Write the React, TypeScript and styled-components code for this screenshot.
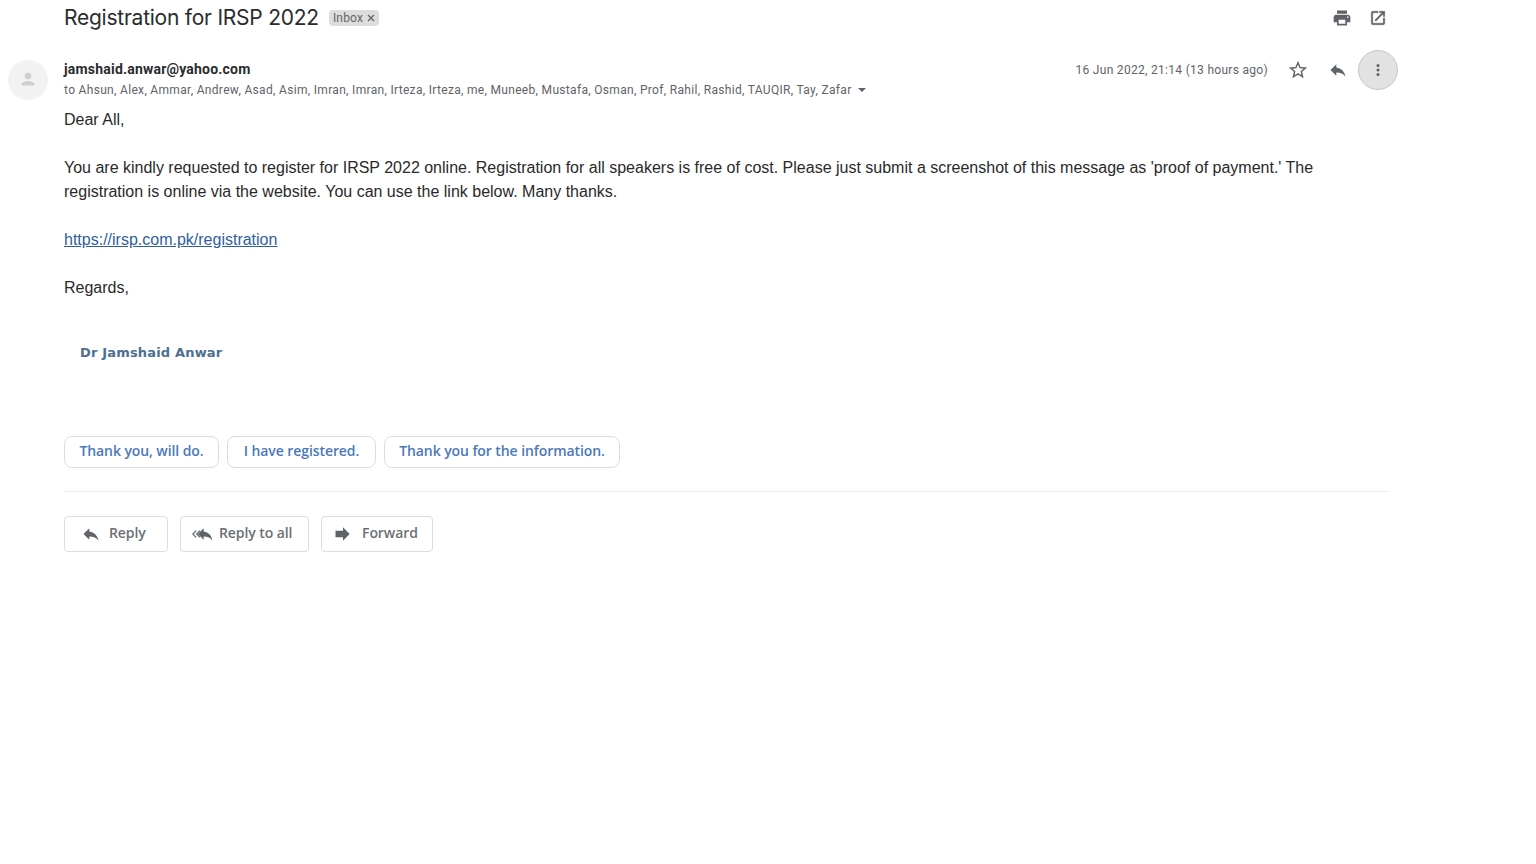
import React from "react";
import styled, { createGlobalStyle } from "styled-components";

const Global = createGlobalStyle`
  html, body { margin: 0; padding: 0; background: #fff; }
  body { font-family: Roboto, "Liberation Sans", sans-serif; color: #202124; }
`;

const Page = styled.div`
  width: 1536px;
  height: 864px;
  overflow: hidden;
  display: flex;
  flex-direction: column;
`;

const TitleRow = styled.div`
  height: 36px;
  width: 1396px;
  padding: 0 6px 0 64px;
  box-sizing: border-box;
  display: flex;
  align-items: center;
  margin-bottom: 14px;
`;

const Subject = styled.h1`
  margin: 0;
  font: 400 21px/28px Inter, Roboto, sans-serif;
  color: #2a2b2e;
  letter-spacing: -0.24px;
`;

const Label = styled.span`
  margin-left: 10px;
  height: 16px;
  padding: 0 4px;
  background: #dddddd;
  border-radius: 4px;
  display: inline-flex;
  align-items: center;
  gap: 4px;
  font: 400 12px/16px Roboto, sans-serif;
  letter-spacing: 0.2px;
  color: #666;
`;

const TitleTools = styled.div`
  margin-left: auto;
  display: flex;
  gap: 12px;
`;

const ToolSlot = styled.span`
  width: 24px;
  height: 24px;
  display: flex;
  align-items: center;
  justify-content: center;
  color: #5f6368;
`;

const Message = styled.div`
  display: flex;
  width: 1398px;
`;

const AvatarColumn = styled.div`
  width: 64px;
  padding-left: 8px;
  box-sizing: border-box;
  flex: none;
`;

const Avatar = styled.div`
  width: 40px;
  height: 40px;
  margin-top: 10px;
  border-radius: 50%;
  background: #f2f2f2;
  display: flex;
  align-items: center;
  justify-content: center;
`;

const Content = styled.div`
  flex: 1;
  min-width: 0;
`;

const HeadRow = styled.div`
  display: flex;
  height: 58px;
`;

const Who = styled.div`
  flex: 1;
  padding-top: 9px;
`;

const Sender = styled.div`
  font: 700 14px/20px Roboto, sans-serif;
  letter-spacing: 0.2px;
  color: #2a2b2e;
`;

const Recipients = styled.div`
  display: flex;
  align-items: center;
  font: 400 12px/20px Roboto, sans-serif;
  letter-spacing: 0.32px;
  color: #5f6368;
  margin-top: 1px;
`;

const Caret = styled.span`
  margin-left: 6px;
  width: 0;
  height: 0;
  border-left: 4px solid transparent;
  border-right: 4px solid transparent;
  border-top: 4px solid #5f6368;
`;

const Meta = styled.div`
  display: flex;
  align-items: center;
  height: 40px;
`;

const Stamp = styled.span`
  font: 400 12px/20px Roboto, sans-serif;
  letter-spacing: 0.3px;
  color: #5f6368;
  margin-right: 10px;
`;

const IconCircle = styled.span<{ $active?: boolean }>`
  width: 40px;
  height: 40px;
  box-sizing: border-box;
  border-radius: 50%;
  display: flex;
  align-items: center;
  justify-content: center;
  color: #5f6368;
  background: ${(p) => (p.$active ? "#e2e2e2" : "transparent")};
  border: ${(p) => (p.$active ? "1px solid #c8c8c8" : "none")};
`;

const Body = styled.div`
  font: 400 16px/24px "Liberation Sans", Arial, sans-serif;
  color: #2a2a2a;
  width: 1280px;
`;

const Para = styled.p`
  margin: 0 0 24px;
`;

const LinkText = styled.a`
  color: #2f5f9e;
  text-decoration: underline;
`;

const Signature = styled.div`
  font: 700 13px/16px "DejaVu Sans", Verdana, sans-serif;
  letter-spacing: 0.17px;
  color: #4c6f92;
  padding-left: 16px;
  margin-top: 45px;
`;

const Chips = styled.div`
  display: flex;
  gap: 8px;
  margin-top: 75px;
`;

const Chip = styled.span<{ $w: number }>`
  width: ${(p) => p.$w}px;
  height: 32px;
  box-sizing: border-box;
  padding-bottom: 2px;
  border: 1px solid #dadce0;
  border-radius: 8px;
  display: flex;
  align-items: center;
  justify-content: center;
  font: 600 14px/20px "Open Sans", Roboto, sans-serif;
  letter-spacing: -0.08px;
  color: #4a78bb;
`;

const Divider = styled.div`
  width: 1324px;
  height: 1px;
  background: #ebebeb;
  margin-top: 23px;
`;

const Actions = styled.div`
  display: flex;
  gap: 12px;
  margin-top: 24px;
`;

const ActionButton = styled.span<{ $w: number; $gap: number; $pad: number }>`
  width: ${(p) => p.$w}px;
  height: 36px;
  box-sizing: border-box;
  padding-left: ${(p) => p.$pad}px;
  gap: ${(p) => p.$gap}px;
  border: 1px solid #dadce0;
  border-radius: 4px;
  display: flex;
  align-items: center;
  font: 600 14px/20px "Open Sans", Roboto, sans-serif;
  letter-spacing: -0.08px;
  color: #6c7074;
`;

const ActionText = styled.span`
  padding-bottom: 2px;
`;

const ReplyGlyph = ({ size = 20 }: { size?: number }) => (
  <svg width={size} height={size} viewBox="0 0 24 24" fill="#5f6368">
    <path d="M10 9V5l-7 7 7 7v-4.1c5 0 8.5 1.6 11 5.1-1-5-4-10-11-11z" />
  </svg>
);

const ReplyAllGlyph = () => (
  <svg width="22" height="20" viewBox="0 0 26 24" fill="#5f6368">
    <path d="M5.5 7.5 1 12l4.5 4.5 1-1L3 12l3.5-3.5zM10 7.5 5.5 12l4.5 4.500 1-1L7.500 12l3.5-3.500z" />
    <path d="M15 9V5l-7 7 7 7v-4.100c5 0 8.500 1.600 10.500 5.100-.8-5-3.500-10-10.500-11z" />
  </svg>
);

const ForwardGlyph = () => (
  <svg width="20" height="20" viewBox="0 0 24 24" fill="#5f6368">
    <path d="M12 8V4l8 8-8 8v-4H3V8h9z" />
  </svg>
);

export default function App() {
  return (
    <Page>
      <Global />
      <TitleRow>
        <Subject>Registration for IRSP 2022</Subject>
        <Label>
          Inbox
          <svg width="8" height="8" viewBox="0 0 8 8" stroke="#666" strokeWidth="1.4">
            <path d="M1 1l6 6M7 1L1 7" />
          </svg>
        </Label>
        <TitleTools>
          <ToolSlot>
            <svg width="20" height="20" viewBox="0 0 24 24" fill="#5f6368">
              <path d="M19 8H5c-1.66 0-3 1.34-3 3v6h4v4h12v-4h4v-6c0-1.66-1.34-3-3-3zm-3 11H8v-5h8v5zm3-7c-.55 0-1-.45-1-1s.45-1 1-1 1 .45 1 1-.45 1-1 1zm-1-9H6v4h12V3z" />
            </svg>
          </ToolSlot>
          <ToolSlot>
            <svg width="18" height="18" viewBox="0 0 24 24" fill="#5f6368" stroke="#5f6368" strokeWidth="0.6">
              <path d="M19 19H5V5h7V3H5a2 2 0 0 0-2 2v14a2 2 0 0 0 2 2h14c1.100 0 2-.9 2-2v-7h-2v7zM14 3v2h3.590l-9.830 9.830 1.410 1.410L19 6.410V10h2V3h-7z" />
            </svg>
          </ToolSlot>
        </TitleTools>
      </TitleRow>
      <Message>
        <AvatarColumn>
          <Avatar>
            <svg width="20" height="20" viewBox="0 0 20 20" fill="#cfcfcf">
              <circle cx="10" cy="6" r="3.300" />
              <path d="M3.500 15.500v-1.200C3.500 12.300 7.300 11 10 11s6.500 1.300 6.500 3.300v1.200h-13z" />
            </svg>
          </Avatar>
        </AvatarColumn>
        <Content>
          <HeadRow>
            <Who>
              <Sender>jamshaid.anwar@yahoo.com</Sender>
              <Recipients>
                to Ahsun, Alex, Ammar, Andrew, Asad, Asim, Imran, Imran, Irteza, Irteza, me, Muneeb, Mustafa, Osman, Prof, Rahil, Rashid, TAUQIR, Tay, Zafar
                <Caret />
              </Recipients>
            </Who>
            <Meta>
              <Stamp>16 Jun 2022, 21:14 (13 hours ago)</Stamp>
              <IconCircle>
                <svg width="22" height="22" viewBox="0 0 24 24" fill="#5f6368">
                  <path d="M22 9.240l-7.190-.62L12 2 9.190 8.630 2 9.240l5.460 4.730L5.820 21 12 17.270 18.180 21l-1.630-7.030L22 9.240zM12 15.400l-3.760 2.270 1-4.280-3.320-2.880 4.380-.38L12 6.100l1.710 4.040 4.380.38-3.320 2.880 1 4.280L12 15.400z" />
                </svg>
              </IconCircle>
              <IconCircle>
                <ReplyGlyph />
              </IconCircle>
              <IconCircle $active>
                <svg width="20" height="20" viewBox="0 0 24 24" fill="#5f6368">
                  <circle cx="12" cy="6.500" r="1.800" />
                  <circle cx="12" cy="12" r="1.800" />
                  <circle cx="12" cy="17.500" r="1.800" />
                </svg>
              </IconCircle>
            </Meta>
          </HeadRow>
          <Body>
            <Para>Dear All,</Para>
            <Para>
              You are kindly requested to register for IRSP 2022 online. Registration for all speakers is free of cost. Please just submit a screenshot of this message as 'proof of payment.' The registration is online via the website. You can use the link below. Many thanks.
            </Para>
            <Para>
              <LinkText href="#">https://irsp.com.pk/registration</LinkText>
            </Para>
            <Para>Regards,</Para>
          </Body>
          <Signature>Dr Jamshaid Anwar</Signature>
          <Chips>
            <Chip $w={155}>Thank you, will do.</Chip>
            <Chip $w={149}>I have registered.</Chip>
            <Chip $w={236}>Thank you for the information.</Chip>
          </Chips>
          <Divider />
          <Actions>
            <ActionButton $w={104} $gap={8} $pad={16}>
              <ReplyGlyph />
              <ActionText>Reply</ActionText>
            </ActionButton>
            <ActionButton $w={129} $gap={6} $pad={10}>
              <ReplyAllGlyph />
              <ActionText>Reply to all</ActionText>
            </ActionButton>
            <ActionButton $w={112} $gap={9} $pad={11}>
              <ForwardGlyph />
              <ActionText>Forward</ActionText>
            </ActionButton>
          </Actions>
        </Content>
      </Message>
    </Page>
  );
}
